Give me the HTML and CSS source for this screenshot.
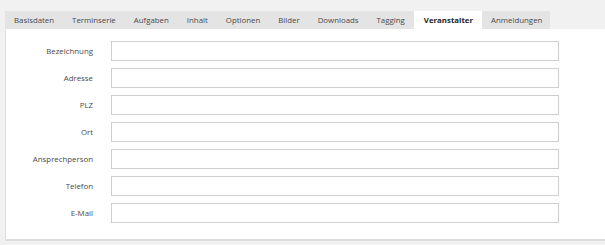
FILE: index.html
```html
<!DOCTYPE html>
<html lang="de">
<head>
<meta charset="utf-8">
<link rel="stylesheet" href="styles.css">
</head>
<body>
<div class="wrap">
  <ul class="tabs">
    <li class="tab">Basisdaten</li>
    <li class="tab">Terminserie</li>
    <li class="tab">Aufgaben</li>
    <li class="tab">Inhalt</li>
    <li class="tab">Optionen</li>
    <li class="tab">Bilder</li>
    <li class="tab">Downloads</li>
    <li class="tab">Tagging</li>
    <li class="tab active">Veranstalter</li>
    <li class="tab">Anmeldungen</li>
  </ul>
  <div class="panel">
    <div class="row"><label class="lbl">Bezeichnung</label><div class="inp"></div></div>
    <div class="row"><label class="lbl">Adresse</label><div class="inp"></div></div>
    <div class="row"><label class="lbl">PLZ</label><div class="inp"></div></div>
    <div class="row"><label class="lbl">Ort</label><div class="inp"></div></div>
    <div class="row"><label class="lbl">Ansprechperson</label><div class="inp"></div></div>
    <div class="row"><label class="lbl">Telefon</label><div class="inp"></div></div>
    <div class="row"><label class="lbl">E-Mail</label><div class="inp"></div></div>
  </div>
</div>
</body>
</html>
```
FILE: styles.css
```css
html, body { margin: 0; padding: 0; }
body {
  background: #f1f1f1;
  font-family: "Open Sans", "Liberation Sans", sans-serif;
  font-size: 7.85px;
  color: #4a4a4a;
  width: 605px;
  height: 245px;
  overflow: hidden;
}
.wrap { padding: 11px 0 0 5px; }
.tabs {
  list-style: none;
  margin: 0;
  padding: 0;
  display: flex;
  width: 545px;
  height: 18px;
  background: #e4e4e4;
}
.tab {
  height: 18px;
  line-height: 18px;
  padding: 0 9px;
  color: #4a4a4a;
}
.tab.active {
  background: #fff;
  color: #1e1e1e;
  font-weight: 700;
  padding: 0 9px 0 10px;
}
.panel {
  background: #fff;
  height: 212px;
  border-left: 1px solid #e0e0e0;
  border-bottom: 2px solid #dcdcdc;
  box-sizing: border-box;
  padding-top: 12px;
}
.row {
  display: flex;
  align-items: center;
  height: 20px;
  margin-bottom: 7px;
}
.lbl {
  width: 87px;
  text-align: right;
  color: #4a4a4a;
}
.inp {
  margin-left: 18px;
  width: 448px;
  height: 20px;
  box-sizing: border-box;
  border: 1px solid #cfcfcf;
  background: #fff;
}
```
